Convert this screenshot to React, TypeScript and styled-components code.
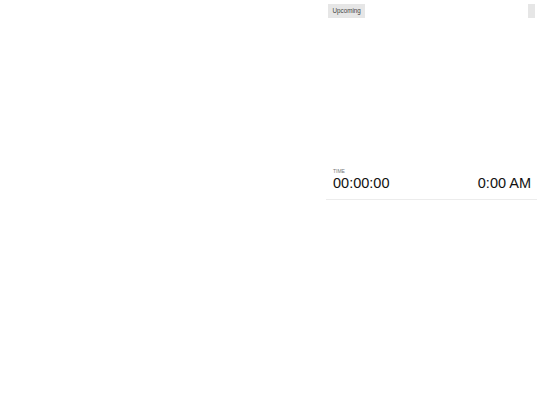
import React from "react";
import styled, { createGlobalStyle } from "styled-components";

const GlobalStyle = createGlobalStyle`
  html, body {
    margin: 0;
    padding: 0;
    background: #ffffff;
    font-family: "Liberation Sans", Arial, sans-serif;
    color: #111;
  }
`;

const App: React.FC = () => {
  return (
    <>
      <GlobalStyle />
      <StyledPage>
        <StyledMain />
        <StyledSidebar>
          <StyledToolbar>
            <StyledTabButton>Upcoming</StyledTabButton>
            <StyledIconButton aria-label="menu" />
          </StyledToolbar>
          <StyledClock>
            <StyledLabel>TIME</StyledLabel>
            <StyledClockRow>
              <StyledValue>00:00:00</StyledValue>
              <StyledValue>0:00 AM</StyledValue>
            </StyledClockRow>
          </StyledClock>
        </StyledSidebar>
      </StyledPage>
    </>
  );
};

export default App;

const StyledPage = styled.div`
  display: grid;
  grid-template-columns: 1fr 211px;
  column-gap: 3px;
  padding-right: 3px;
  height: 405px;
`;

const StyledMain = styled.div``;

const StyledSidebar = styled.div`
  display: flex;
  flex-direction: column;
`;

const StyledToolbar = styled.div`
  display: flex;
  align-items: center;
  justify-content: space-between;
  padding: 4px 2px 0 2px;
`;

const StyledTabButton = styled.button`
  border: none;
  background: #e6e6e6;
  color: #444;
  font-family: "Liberation Sans", Arial, sans-serif;
  font-size: 6.3px;
  line-height: 14px;
  height: 14px;
  padding: 0 4.5px;
  margin: 0;
`;

const StyledIconButton = styled.button`
  border: none;
  background: #e6e6e6;
  width: 7px;
  height: 14px;
  padding: 0;
  margin: 0;
`;

const StyledClock = styled.div`
  margin-top: 150px;
  padding: 0 6px 7px 7px;
  border-bottom: 1px solid #ececec;
`;

const StyledLabel = styled.div`
  font-size: 5px;
  color: #777;
  line-height: 7px;
`;

const StyledClockRow = styled.div`
  display: flex;
  justify-content: space-between;
  align-items: baseline;
`;

const StyledValue = styled.span`
  font-size: 14.5px;
  line-height: 17px;
  color: #111;
`;
